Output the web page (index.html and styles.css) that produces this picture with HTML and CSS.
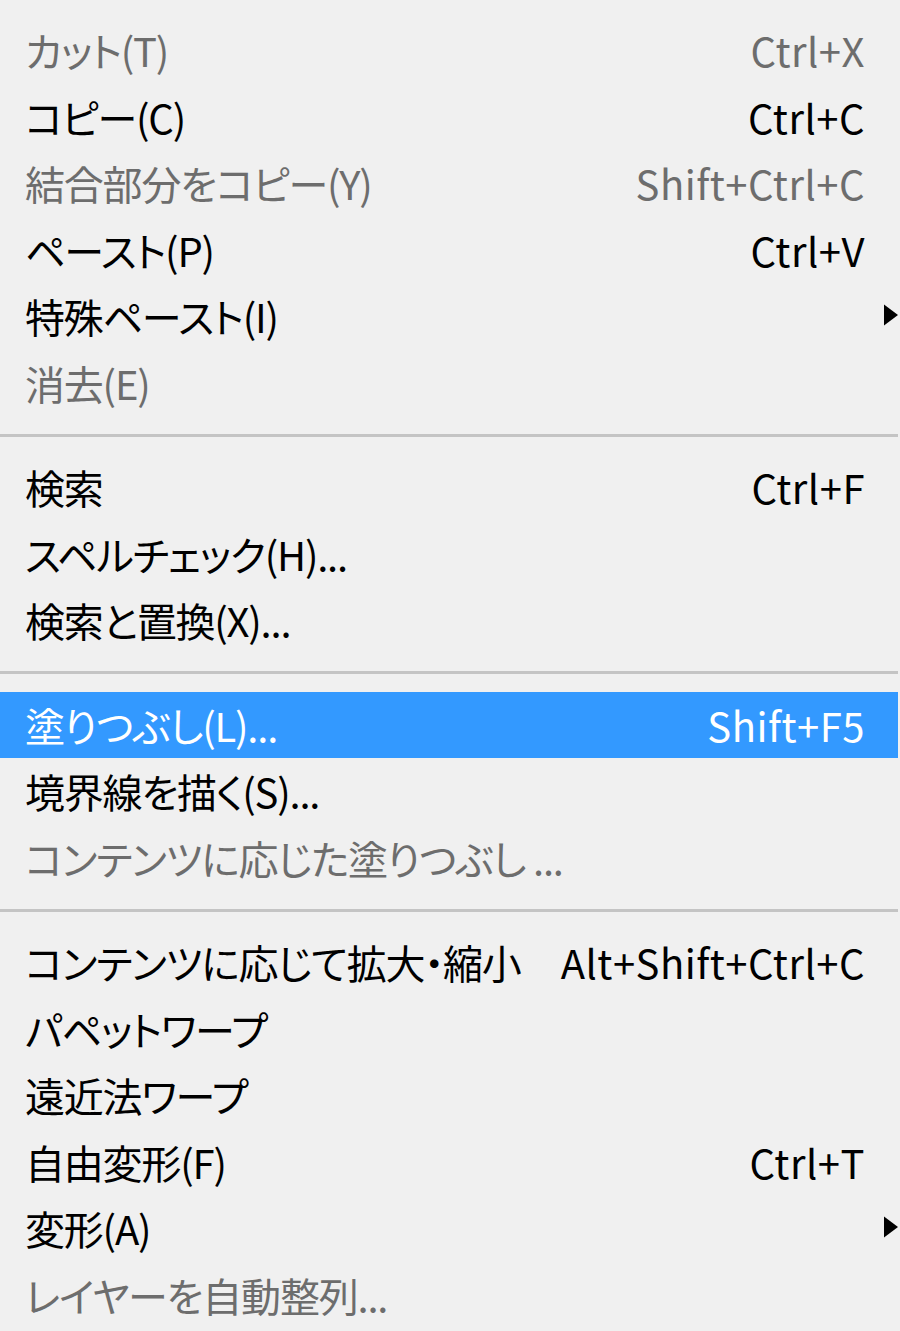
FILE: index.html
```html
<!DOCTYPE html>
<html lang="ja">

<head>
    <meta charset="UTF-8">
    <meta name="viewport" content="width=device-width, initial-scale=1.0">
    <title>編集メニュー</title>
    <link rel="stylesheet" href="styles.css">
</head>

<body>
    <div class="menu">
        <div class="item off"><span class="label">カット(T)</span><span class="keys">Ctrl+X</span></div>
        <div class="item"><span class="label">コピー(C)</span><span class="keys">Ctrl+C</span></div>
        <div class="item off"><span class="label">結合部分をコピー(Y)</span><span class="keys">Shift+Ctrl+C</span></div>
        <div class="item"><span class="label">ペースト(P)</span><span class="keys">Ctrl+V</span></div>
        <div class="item"><span class="label">特殊ペースト(I)</span><span class="arrow"><svg width="16" height="24" viewBox="0 0 16 24"><path d="M0 0 L16 12 L0 24 Z" fill="#000"/></svg></span></div>
        <div class="item off"><span class="label">消去(E)</span></div>

        <div class="sep"></div>

        <div class="item"><span class="label">検索</span><span class="keys">Ctrl+F</span></div>
        <div class="item"><span class="label">スペルチェック(H)...</span></div>
        <div class="item"><span class="label">検索と置換(X)...</span></div>

        <div class="sep"></div>

        <div class="item active"><span class="label">塗りつぶし(L)...</span><span class="keys">Shift+F5</span></div>
        <div class="item"><span class="label">境界線を描く(S)...</span></div>
        <div class="item off"><span class="label">コンテンツに応じた塗りつぶし ...</span></div>

        <div class="sep"></div>

        <div class="item"><span class="label">コンテンツに応じて拡大・縮小</span><span class="keys">Alt+Shift+Ctrl+C</span></div>
        <div class="item"><span class="label">パペットワープ</span></div>
        <div class="item"><span class="label">遠近法ワープ</span></div>
        <div class="item"><span class="label">自由変形(F)</span><span class="keys">Ctrl+T</span></div>
        <div class="item"><span class="label">変形(A)</span><span class="arrow"><svg width="16" height="24" viewBox="0 0 16 24"><path d="M0 0 L16 12 L0 24 Z" fill="#000"/></svg></span></div>
        <div class="item off"><span class="label">レイヤーを自動整列...</span></div>
    </div>
</body>

</html>
```

FILE: styles.css
```css
html,
body {
    margin: 0;
    background-color: #f0f0f0;
}

body {
    font-family: "Noto Sans CJK JP", "Noto Sans", sans-serif;
    font-size: 40px;
    color: #000;
    overflow: hidden;
}

.menu {
    width: 898px;
    padding-top: 17px;
}

.item {
    display: flex;
    align-items: center;
    height: 66.5px;
    padding-left: 25px;
    white-space: nowrap;
    font-feature-settings: "palt";
}

.label {
    flex: 1;
    letter-spacing: -1.2px;
}

.keys {
    padding-right: 33px;
    letter-spacing: 0.5px;
}

.arrow {
    display: flex;
    align-items: center;
    width: 14px;
    overflow: hidden;
    margin-bottom: 2px;
}

.item.off {
    color: #6d6d6d;
}

.item.active {
    background-color: #3399ff;
    color: #fff;
}

.sep {
    height: 38px;
    display: flex;
    align-items: center;
}

.sep::before {
    content: "";
    display: block;
    width: 100%;
    height: 3px;
    background-color: #c4c4c4;
}
```
